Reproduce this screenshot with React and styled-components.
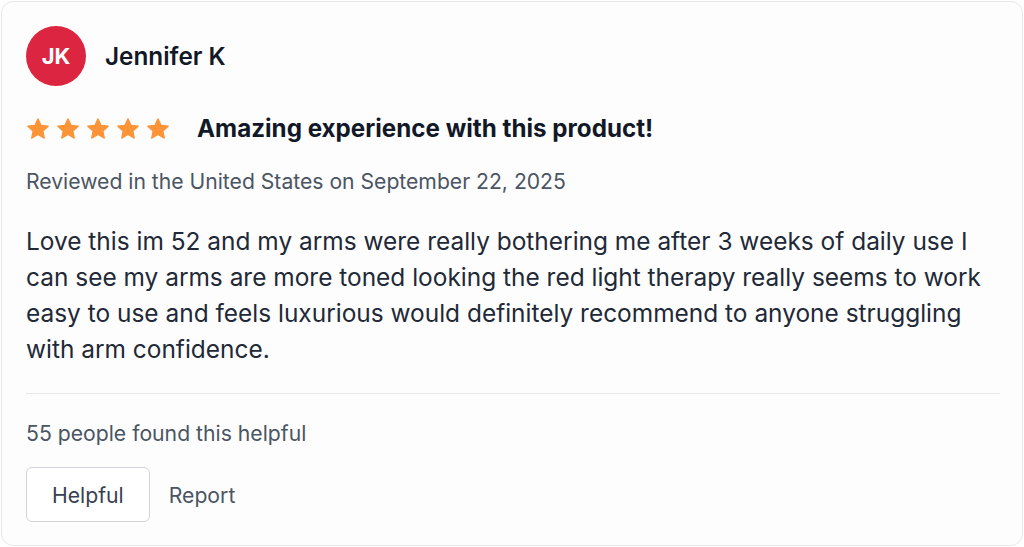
import React from "react";
import styled, { createGlobalStyle } from "styled-components";

const Global = createGlobalStyle`
  html, body { margin: 0; padding: 0; background: #ffffff; }
  body { font-family: Inter, "Noto Sans", sans-serif; -webkit-font-smoothing: antialiased; }
`;

const Card = styled.div`
  box-sizing: border-box;
  margin: 1px 0 0 1px;
  width: 1022px;
  height: 545px;
  background: #fdfdfd;
  border: 1px solid #e5e7eb;
  border-radius: 12px;
  padding: 24px 24px 22px 24px;
  display: flex;
  flex-direction: column;
`;

const Header = styled.div`
  display: flex;
  align-items: center;
  gap: 19px;
`;

const Avatar = styled.div`
  width: 60px;
  height: 60px;
  border-radius: 50%;
  background: #dc2540;
  color: #fff;
  display: flex;
  align-items: center;
  justify-content: center;
  font-size: 22px;
  font-weight: 700;
`;

const Name = styled.div`
  font-size: 24.3px;
  font-weight: 600;
  color: #111827;
`;

const RatingRow = styled.div`
  display: flex;
  align-items: center;
  gap: 27px;
  margin-top: 28px;
  height: 30px;
`;

const Stars = styled.div`
  display: flex;
  gap: 6px;
`;

const Title = styled.div`
  font-size: 24.2px;
  line-height: 30px;
  font-weight: 700;
  color: #111827;
`;

const Meta = styled.div`
  margin-top: 25px;
  font-size: 21.15px;
  line-height: 26px;
  color: #4b5563;
`;

const Body = styled.p`
  margin: 28px 0 0;
  font-size: 24.45px;
  line-height: 36px;
  color: #1f2937;
`;

const Divider = styled.hr`
  margin: 26px 0 0;
  border: 0;
  border-top: 1px solid #e5e7eb;
  width: 974px;
`;

const Helpful = styled.div`
  margin-top: 26px;
  font-size: 21.2px;
  line-height: 26px;
  color: #4b5563;
`;

const Actions = styled.div`
  display: flex;
  align-items: center;
  gap: 19px;
  margin-top: 21px;
`;

const Button = styled.button`
  box-sizing: border-box;
  height: 55px;
  padding: 0 25px;
  background: #fff;
  border: 1px solid #d1d5db;
  border-radius: 6px;
  font-family: inherit;
  font-size: 21.2px;
  color: #374151;
`;

const Link = styled.span`
  font-size: 21.2px;
  color: #4b5563;
`;

const Star = () => (
  <svg width="24" height="24" viewBox="0 0 24 24">
    <path
      fill="#fd9437"
      d="M12 1.8l3.05 6.55 7.15.85-5.28 4.9 1.4 7.07L12 17.6l-6.32 3.57 1.4-7.07L1.8 9.2l7.15-.85z"
      stroke="#fd9437"
      strokeLinejoin="round"
      strokeWidth="1.2"
    />
  </svg>
);

export default function App() {
  return (
    <>
      <Global />
      <Card>
        <Header>
          <Avatar>JK</Avatar>
          <Name>Jennifer K</Name>
        </Header>
        <RatingRow>
          <Stars>
            {[0, 1, 2, 3, 4].map((i) => (
              <Star key={i} />
            ))}
          </Stars>
          <Title>Amazing experience with this product!</Title>
        </RatingRow>
        <Meta>Reviewed in the United States on September 22, 2025</Meta>
        <Body>
          Love this im 52 and my arms were really bothering me after 3 weeks of daily use I
          can see my arms are more toned looking the red light therapy really seems to work
          easy to use and feels luxurious would definitely recommend to anyone struggling
          with arm confidence.
        </Body>
        <Divider />
        <Helpful>55 people found this helpful</Helpful>
        <Actions>
          <Button>Helpful</Button>
          <Link>Report</Link>
        </Actions>
      </Card>
    </>
  );
}
